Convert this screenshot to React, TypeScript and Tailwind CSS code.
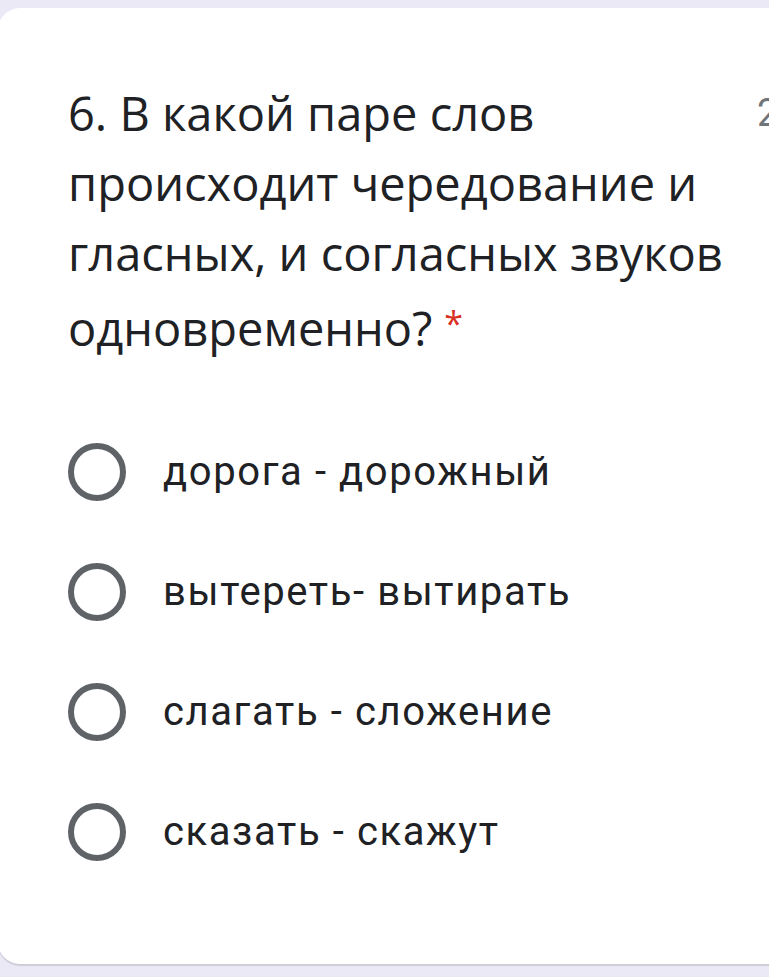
import React from "react";

const options = [
  "дорога - дорожный",
  "вытереть- вытирать",
  "слагать - сложение",
  "сказать - скажут",
];

export default function App() {
  return (
    <div className="w-[769px] h-[977px] overflow-hidden bg-[#ece9f6] pt-[8px]">
      {/* Question card */}
      <div className="w-[900px] h-[956px] -ml-[2px] rounded-[22px] bg-white shadow-[0_2px_1px_rgba(0,0,0,0.12)] pl-[70px] pt-[70px]">
        <div className="flex items-start">
          <h2
            className="w-[672px] text-[47px] leading-[70px] text-[#202124]"
            style={{ fontFamily: "'Open Sans', sans-serif" }}
          >
            6. В какой паре слов происходит чередование и гласных, и согласных
            звуков одновременно?
            <span className="ml-[12px] text-[34px] text-[#d93025] align-[10px]">*</span>
          </h2>
          <div
            className="ml-[17px] text-[38px] leading-[70px] text-[#70757a] whitespace-nowrap"
            style={{ fontFamily: "Roboto, sans-serif" }}
          >
            2 балла
          </div>
        </div>

        {/* Options */}
        <div className="mt-[80px] flex flex-col gap-[62px]">
          {options.map((o) => (
            <div key={o} className="flex items-center">
              <span className="w-[58px] h-[58px] rounded-full border-[6px] border-[#5f6368] shrink-0" />
              <span
                className="ml-[37px] text-[40px] leading-[58px] tracking-[1.6px] text-[#202124]"
                style={{ fontFamily: "Roboto, sans-serif" }}
              >
                {o}
              </span>
            </div>
          ))}
        </div>
      </div>
    </div>
  );
}
